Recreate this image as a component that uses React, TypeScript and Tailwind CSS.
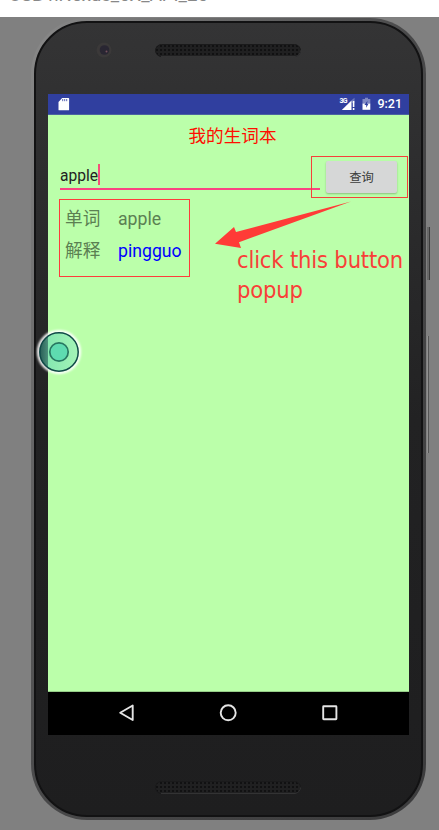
import React from "react";

const ROBOTO = "font-['Roboto','Noto_Sans_CJK_SC',sans-serif]";

function Speaker() {
  return (
    <svg width="146" height="13" viewBox="0 0 146 13">
      <defs>
        <pattern id="mesh" width="4" height="4" patternUnits="userSpaceOnUse">
          <rect width="4" height="4" fill="#202021" />
          <rect x="1" y="1" width="2" height="2" fill="#111112" />
        </pattern>
      </defs>
      <rect x="0.5" y="0.5" width="145" height="12" rx="6" fill="url(#mesh)" stroke="#1a1a1b" />
      <path d="M6 12.5H140a6 6 0 0 0 5.5-6" fill="none" stroke="#333334" />
    </svg>
  );
}

function StatusBar() {
  return (
    <div className="flex h-[21px] shrink-0 items-center border-b border-[#4b63a0] bg-[#303f9f] pl-[10px] pr-[7px]">
      <svg width="12" height="14" viewBox="0 0 12 14">
        <path d="M4.2 1h6.3q.6 0 .6.7v11q0 .6-.6.6H1.1q-.6 0-.6-.6V5z" fill="#fff" />
        <path d="M4.7 2v2.2M6.7 2v2.2M8.7 2v2.2" stroke="#303f9f" strokeWidth=".8" />
      </svg>
      <svg className="ml-auto" width="17" height="14" viewBox="0 0 17 14">
        <text x="0.5" y="6" fontSize="7" fontWeight="700" fill="#fff" fontFamily="Roboto, sans-serif" textLength="8">3G</text>
        <path d="M12.5 3.3L15.5 .8V6H12.5z" fill="#6c78bb" />
        <path d="M12.5 3.5V13H2.8z" fill="#fff" />
        <path d="M14.6 4v6M14.6 11v2" stroke="#fff" strokeWidth="1.6" />
      </svg>
      <svg className="ml-[6px]" width="9" height="14" viewBox="0 0 9 14">
        <path d="M3 .8h3V2h2.3v4.5H.5V2H3z" fill="#8089c4" />
        <path d="M.5 6.5h7.8v6.3H.5z" fill="#fff" />
        <path d="M5.5 3.8L2.4 8h1.8v2.8L6.5 6.8H5z" fill="#303f9f" />
      </svg>
      <span className="ml-[6px] mt-px text-[12.5px] font-medium leading-none text-white">9:21</span>
    </div>
  );
}

function NavBar() {
  return (
    <div className="flex h-[43px] shrink-0 items-center bg-black pl-[70px]">
      <svg className="-mt-px" width="222" height="20" viewBox="0 0 222 20" fill="none" stroke="#e4e4e4" strokeWidth="1.9" strokeLinejoin="round">
        <path d="M2.2 9.8L14.7 2.5V17z" />
        <circle cx="110.2" cy="9.8" r="7.5" />
        <rect x="205.2" y="3.2" width="13.2" height="13" rx=".5" />
      </svg>
    </div>
  );
}

function AppScreen() {
  return (
    <div className="flex h-[641px] w-[361px] flex-col overflow-hidden bg-[#bbffaa]">
      <StatusBar />
      <h1 className="mt-[10px] h-[21px] pl-[8px] text-center text-[17.6px] font-normal leading-[22px] text-[#ff0d00]">我的生词本</h1>
      <div className="mt-[10px] flex h-[42px]">
        <div className="ml-[12px] mt-[2px] flex h-[32px] w-[260px] border-b-2 border-[#f94482]">
          <span className="pt-[8px] text-[15.6px] leading-[21px] text-[#222]">apple</span>
          <span className="mt-[6px] h-[21px] w-[2px] bg-[#f5507a]" />
        </div>
        <div className="-ml-[9px] flex h-[42px] w-[97px] items-center border border-[#f6403a] pl-[14px]">
          <button className="h-[32px] w-[71px] rounded-[2px] bg-[#d6d7d7] text-[12.3px] leading-[34px] text-[#3b3d3b] shadow-[0_1px_2px_rgba(0,0,0,0.25)]">查询</button>
        </div>
      </div>
      <div className="ml-[11px] mt-px grid h-[78px] w-[131px] shrink-0 grid-cols-[53px_1fr] content-start border border-[#ff3b3b] pl-[5px] pt-[3px] text-[17.7px] leading-[32px] text-[#5b8052]">
        <span>单词</span>
        <span>apple</span>
        <span>解释</span>
        <span className="pt-px text-[#0000ff] leading-[31px]">pingguo</span>
      </div>
      <div className="flex-1" />
      <div className="h-px shrink-0 bg-[#96cc88]" />
      <NavBar />
    </div>
  );
}

export default function App() {
  return (
    <div className={`relative flex h-[830px] w-[439px] flex-col overflow-hidden bg-[#808080] ${ROBOTO}`}>
      <div className="relative h-[17px] shrink-0 overflow-hidden bg-white">
        <span className="absolute -top-[15px] left-[9px] whitespace-pre text-[18.6px] leading-[20px] text-[#888]">USB nNexus_5X_API_25</span>
      </div>
      <div className="ml-[31px] mt-px h-[802px] w-[395px] rounded-[56px] bg-gradient-to-br from-[#8a8a8a] via-[#484849] to-[#3c3c3d] p-[3px]">
        <div className="h-full rounded-[53px] border-2 border-[#121213] bg-gradient-to-b from-[#343435] via-[#222223] to-[#1e1e1f]">
          <div className="flex h-[71px] items-start pt-[20px]">
            <svg className="ml-[60px] mt-[-1px]" width="16" height="16" viewBox="0 0 16 16">
              <circle cx="8" cy="8" r="7.5" fill="#3b3939" />
              <circle cx="8.5" cy="8" r="4.8" fill="#292632" />
              <circle cx="10.5" cy="9.5" r="1" fill="#75505d" />
            </svg>
            <div className="ml-[43px] mt-[1px]"><Speaker /></div>
          </div>
          <div className="ml-[12px]"><AppScreen /></div>
          <div className="ml-[119px] mt-[46px]"><Speaker /></div>
        </div>
      </div>

      <div className="absolute left-[427px] top-[227px] h-[53px] w-[3px] border-r border-[#3c3c3c] bg-[#686868]" />
      <div className="absolute left-[427px] top-[336px] h-[117px] w-[2px] border-r border-[#555] bg-[#919191]" />

      <svg className="absolute left-[210px] top-[195px]" width="145" height="60" viewBox="210 195 145 60">
        <path d="M351 201.5L239 242.3L241 248L215 243.8L234 227L236 232Z" fill="#ff3b37" />
      </svg>
      <p className="absolute left-[237px] top-[245px] whitespace-pre text-[23.5px] leading-[30px] tracking-[-0.17px] text-[#f93e38] font-['DejaVu_Sans_Condensed','DejaVu_Sans',sans-serif]">{"click this button\npopup"}</p>

      <svg className="absolute left-[34px] top-[327px]" width="50" height="50" viewBox="0 0 50 50">
        <defs>
          <filter id="halo" x="-20%" y="-20%" width="140%" height="140%"><feGaussianBlur stdDeviation="1.3" /></filter>
          <linearGradient id="ring"><stop offset="0" stopColor="#285d56" /><stop offset=".2" stopColor="#498b78" /><stop offset=".22" stopColor="#86e8b1" /><stop offset="1" stopColor="#a4f4b6" /></linearGradient>
        </defs>
        <circle cx="25" cy="25" r="20.5" fill="none" stroke="#fff" strokeWidth="3" filter="url(#halo)" />
        <circle cx="25" cy="25" r="19.2" fill="url(#ring)" stroke="#104a48" strokeWidth="1.5" />
        <circle cx="25" cy="25" r="9.2" fill="#5edbb0" stroke="#287761" strokeWidth="1.7" />
      </svg>
    </div>
  );
}
